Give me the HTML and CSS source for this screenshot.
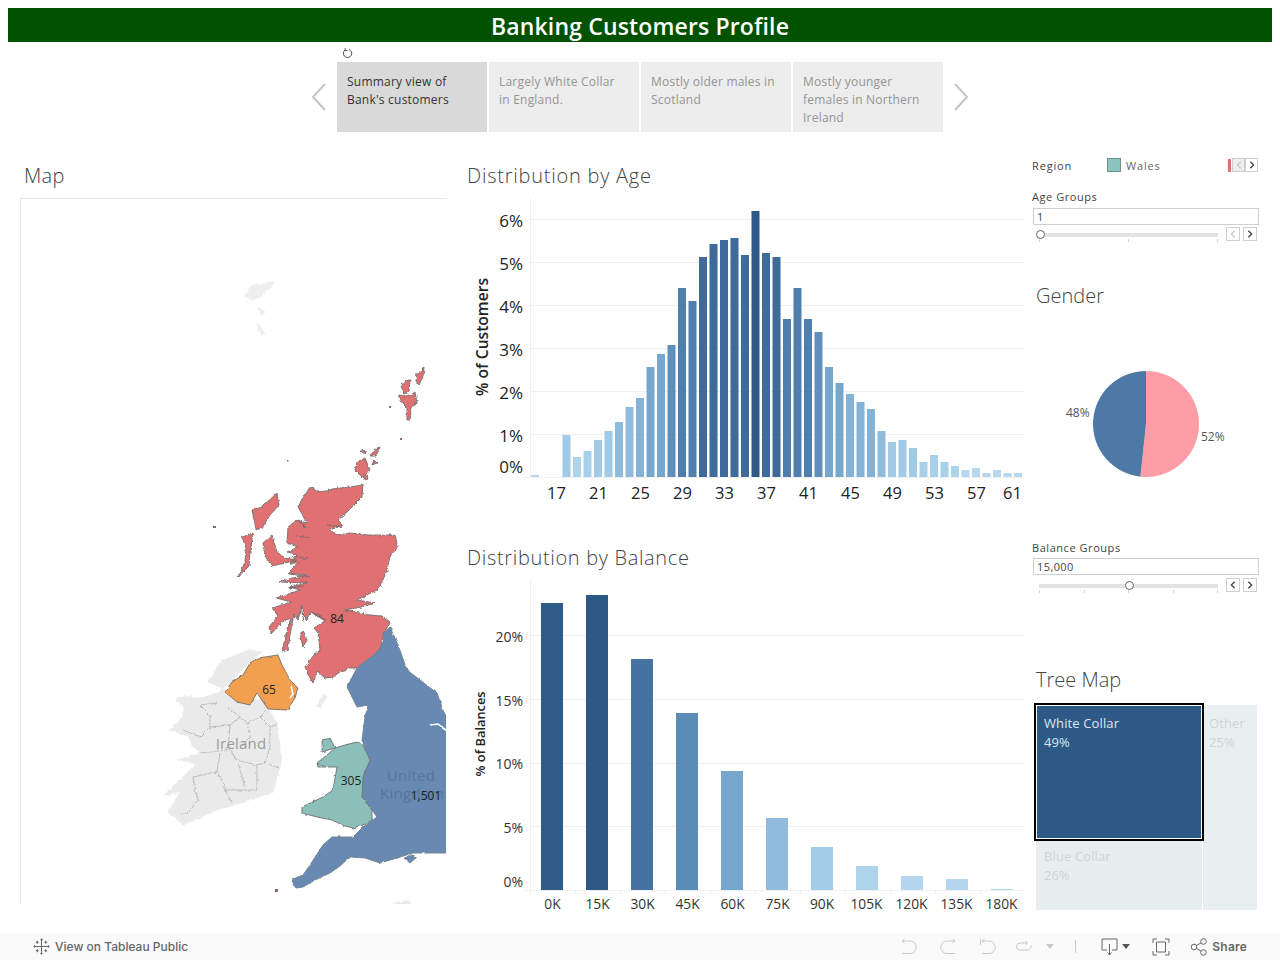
FILE: index.html
```html
<!DOCTYPE html>
<html lang="en">
<head>
<meta charset="utf-8">
<title>Banking Customers Profile</title>
<link rel="stylesheet" href="styles.css">
</head>
<body>
<div class="page">
  <header class="banner">Banking Customers Profile</header>

  <nav class="story">
    <svg class="revert" viewBox="0 0 12 12"><path d="M3 2.5 A4.2 4.2 0 1 0 7 1.9"/><path d="M3.2 0.6 L3 3.2 L5.6 3"/></svg>
    <div class="story-row">
      <svg class="arrow" viewBox="0 0 16 30"><path d="M14 2 L2 15 L14 28"/></svg>
      <div class="point active">Summary view of<br>Bank's customers</div>
      <div class="point">Largely White Collar<br>in England.</div>
      <div class="point">Mostly older males in<br>Scotland</div>
      <div class="point">Mostly younger<br>females in Northern<br>Ireland</div>
      <svg class="arrow" viewBox="0 0 16 30"><path d="M2 2 L14 15 L2 28"/></svg>
    </div>
  </nav>

  <main class="dash">
    <section class="col-map">
      <h2 class="title map-title">Map</h2>
      <div class="map-frame">
        <svg class="map" viewBox="20 198 426 706">
          <defs>
            <filter id="rough" x="-5%" y="-5%" width="110%" height="110%">
              <feTurbulence type="fractalNoise" baseFrequency="0.3" numOctaves="2" seed="4"/>
              <feDisplacementMap in="SourceGraphic" scale="3.5" xChannelSelector="R" yChannelSelector="G"/>
            </filter>
            <filter id="soft" x="-5%" y="-5%" width="110%" height="110%">
              <feTurbulence type="fractalNoise" baseFrequency="0.16" numOctaves="2" seed="7"/>
              <feDisplacementMap in="SourceGraphic" scale="2.5" xChannelSelector="R" yChannelSelector="G"/>
            </filter>
          </defs>
          <g filter="url(#rough)">
            <path class="faint" d="M250 286 L256 284 L262 285 L268 282 L275 282 L270 288 L264 292 L262 297 L252 300 L243 295 L248 292 Z M258 307 L265 312 L262 316 Z M257 323 L263 330 L264 336 L258 330 Z"/>
            <path class="grey" d="M250 650 L262 652 L240 672 L232 682 L225 687 L218 693 L200 698 L188 696 L175 698 L184 708 L182 718 L170 730 L188 736 L193 747 L200 753 L178 760 L196 764 L183 777 L163 796 L180 792 L168 812 L183 825 L217 810 L245 802 L273 792 L282 760 L277 723 L268 708 L262 700 L228 692 L208 682 L222 660 Z"/>
            <path class="grey" d="M323 695 L327 696 L320 708 L316 707 Z"/>
            <path class="grey" d="M393 903 L410 901 L411 906 L398 906 Z"/>
            <path class="county" d="M183 730 L200 737 L210 727 L210 715 L200 705 L218 703 M210 727 L230 725 L240 717 L227 707 M230 725 L228 747 L237 760 L257 765 L265 763 M200 753 L227 750 L228 747 M217 772 L220 753 M193 777 L217 772 L222 780 L225 790 L257 790 M193 777 L195 790 L198 800 L188 813 L180 815 M225 790 L232 803 M238 763 L245 787 M257 765 L257 790 M240 717 L247 723 L260 717 L267 710 M247 723 L250 737 L238 750 M260 717 L270 727 L270 747 L265 763 M270 765 L280 768 M270 727 L277 725"/>

            <path class="scot" d="M310 487 L318 492 L326 491 L332 489 L350 487 L363 485 L362 497 L355 504 L345 514 L338 520 L343 525 L330 530 L338 535 L350 533 L368 535 L395 535 L398 547 L390 556 L387 570 L380 587 L377 590 L365 596 L357 600 L375 603 L361 607 L345 610 L370 615 L382 616 L390 623 L384 633 L380 650 L365 662 L357 668 L350 668 L340 672 L333 677 L325 678 L317 671 L313 683 L309 676 L305 667 L313 656 L320 650 L318 633 L314 628 L325 621 L311 612 L306 620 L302 605 L298 620 L294 614 L290 635 L288 650 L282 652 L286 635 L291 618 L282 622 L271 634 L269 627 L278 616 L272 608 L292 602 L276 598 L300 590 L290 587 L307 583 L279 582 L293 578 L307 575 L288 573 L298 563 L290 563 L297 555 L288 552 L298 547 L287 543 L288 527 L297 520 L307 523 L298 507 L303 498 Z"/>
            <path class="scot" d="M277 493 L279 505 L270 515 L262 528 L256 530 L252 510 L262 507 Z M242 537 L253 533 L250 552 L249 566 L243 572 L238 578 L245 562 L246 548 Z M263 543 L272 535 L277 552 L285 558 L297 560 L285 563 L272 566 L265 556 Z M303 630 L307 640 L303 647 L300 638 Z"/>
            <path class="scot" d="M357 462 L365 458 L370 470 L363 478 L355 470 Z M363 449 L367 454 L361 452 Z M372 452 L380 447 L376 456 L370 456 Z M374 460 L377 463 L372 465 Z M365 474 L368 479 L364 480 Z"/>
            <path class="scot" d="M424 368 L423 376 L419 385 L416 381 L417 373 Z M405 381 L410 380 L409 392 L404 394 L401 386 Z M399 395 L406 396 L412 394 L415 392 L417 403 L413 405 L411 408 L410 420 L407 420 L407 408 L402 403 Z"/>
            <path class="loch" d="M298 520 L306 528 M296 536 L310 538 M292 556 L308 559 M289 574 L310 577 M289 588 L304 586 M301 606 L304 622 M312 612 L326 620 M327 525 L342 527"/>
          </g>
          <g filter="url(#soft)">
            <path class="eng" d="M390 627 L398 645 L407 670 L420 680 L437 693 L443 710 L450 727 L460 740 L460 853 L446 853 L430 853 L413 853 L397 858 L380 863 L365 858 L350 857 L340 866 L330 873 L315 880 L303 887 L296 888 L292 883 L293 879 L303 875 L310 865 L323 845 L332 837 L353 837 L363 827 L377 817 L372 810 L362 797 L363 777 L370 760 L362 740 L365 717 L368 705 L357 707 L347 687 L357 668 L380 650 L384 633 Z M404 858 L412 855 L417 857 L410 863 Z"/>
            <path class="wales" d="M322 740 L330 738 L335 748 L322 752 Z M335 748 L345 745 L357 742 L363 745 L370 760 L363 777 L362 797 L372 810 L372 820 L363 825 L353 828 L345 826 L332 820 L317 817 L302 813 L302 807 L323 797 L333 790 L337 767 L318 767 L317 763 L327 755 Z"/>
            <path class="nire" d="M258 658 L278 655 L282 665 L290 680 L298 688 L295 698 L287 710 L268 709 L257 693 L250 705 L237 702 L225 692 L232 682 L243 675 L250 663 Z"/>
            <path class="lough" d="M291 686 L293 694 L290 698 M430 725 L438 724 L447 731"/>
          </g>
          <path class="scot-dot" d="M213 526 h3 v2 h-3 Z M275 889 h3 v3 h-3 Z M287 460 h1.5 v1.5 h-1.5 Z M400 438 h2 v2 h-2 Z M389 406 h2 v2 h-2 Z"/>
          <text class="lbl-ire" x="241" y="749">Ireland</text>
          <text class="lbl-uk" x="411" y="781">United</text>
          <text class="lbl-uk lbl-start" x="380" y="799">Kingdom</text>
          <text class="lbl-val" x="337" y="623">84</text>
          <text class="lbl-val" x="269" y="694">65</text>
          <text class="lbl-val" x="351" y="785">305</text>
          <text class="lbl-val" x="426" y="800">1,501</text>
        </svg>
      </div>
    </section>

    <section class="col-charts">
      <h2 class="title chart-title chart-title-age">Distribution by Age</h2>
      <svg class="chart-age" viewBox="467 198 565 312">
        <path class="grid" d="M530 219.5H1024M530 262.5H1024M530 305.5H1024M530 348.5H1024M530 391.5H1024M530 434.5H1024M525 477.5H1024M530.5 198V477"/>
        <g class="age-y">
          <text x="523" y="227">6%</text><text x="523" y="270">5%</text><text x="523" y="313">4%</text><text x="523" y="356">3%</text><text x="523" y="399">2%</text><text x="523" y="442">1%</text><text x="523" y="473">0%</text>
        </g>
        <text class="age-axis" transform="translate(488 337) rotate(-90)">% of Customers</text>
        <g>
          <rect class="b1" x="531" y="475" width="8" height="2"/>
          <rect class="b4" x="562.5" y="435" width="8" height="42"/>
          <rect class="b2" x="573" y="457" width="8" height="20"/>
          <rect class="b3" x="583.5" y="451" width="8" height="26"/>
          <rect class="b4" x="594" y="440" width="8" height="37"/>
          <rect class="b4" x="604.5" y="431" width="8" height="46"/>
          <rect class="b5" x="615" y="422" width="8" height="55"/>
          <rect class="b5" x="625.5" y="407" width="8" height="70"/>
          <rect class="b6" x="636" y="398" width="8" height="79"/>
          <rect class="b7" x="646.5" y="367" width="8" height="110"/>
          <rect class="b7" x="657" y="354" width="8" height="123"/>
          <rect class="b8" x="667.5" y="345" width="8" height="132"/>
          <rect class="b9" x="678" y="288" width="8" height="189"/>
          <rect class="b9" x="688.5" y="301" width="8" height="176"/>
          <rect class="b10" x="699" y="257" width="8" height="220"/>
          <rect class="b10" x="709.5" y="244" width="8" height="233"/>
          <rect class="b10" x="720" y="240" width="8" height="237"/>
          <rect class="b10" x="730.5" y="238" width="8" height="239"/>
          <rect class="b10" x="741" y="255" width="8" height="222"/>
          <rect class="b11" x="751.5" y="211" width="8" height="266"/>
          <rect class="b10" x="762" y="253" width="8" height="224"/>
          <rect class="b10" x="772.5" y="257" width="8" height="220"/>
          <rect class="b9" x="783" y="319" width="8" height="158"/>
          <rect class="b9" x="793.5" y="288" width="8" height="189"/>
          <rect class="b9" x="804" y="319" width="8" height="158"/>
          <rect class="b8" x="814.5" y="332" width="8" height="145"/>
          <rect class="b7" x="825" y="367" width="8" height="110"/>
          <rect class="b7" x="835.5" y="383" width="8" height="94"/>
          <rect class="b6" x="846" y="394" width="8" height="83"/>
          <rect class="b6" x="856.5" y="402" width="8" height="75"/>
          <rect class="b6" x="867" y="409" width="8" height="68"/>
          <rect class="b5" x="877.5" y="431" width="8" height="46"/>
          <rect class="b4" x="888" y="442" width="8" height="35"/>
          <rect class="b4" x="898.5" y="440" width="8" height="37"/>
          <rect class="b4" x="909" y="448" width="8" height="29"/>
          <rect class="b3" x="919.5" y="462" width="8" height="15"/>
          <rect class="b3" x="930" y="455" width="8" height="22"/>
          <rect class="b3" x="940.5" y="462" width="8" height="15"/>
          <rect class="b2" x="951" y="466" width="8" height="11"/>
          <rect class="b1" x="961.5" y="470" width="8" height="7"/>
          <rect class="b1" x="972" y="468" width="8" height="9"/>
          <rect class="b1" x="982.5" y="473" width="8" height="4"/>
          <rect class="b1" x="993" y="470" width="8" height="7"/>
          <rect class="b1" x="1003.5" y="473" width="8" height="4"/>
          <rect class="b1" x="1014" y="473" width="8" height="4"/>
        </g>
        <g class="age-x">
          <text x="556.5" y="499">17</text><text x="598.5" y="499">21</text><text x="640.5" y="499">25</text><text x="682.5" y="499">29</text><text x="724.5" y="499">33</text><text x="766.5" y="499">37</text><text x="808.5" y="499">41</text><text x="850.5" y="499">45</text><text x="892.5" y="499">49</text><text x="934.5" y="499">53</text><text x="976.5" y="499">57</text><text x="1012.5" y="499">61</text>
        </g>
      </svg>

      <h2 class="title chart-title title-balance">Distribution by Balance</h2>
      <svg class="chart-bal" viewBox="467 580 565 335">
        <path class="grid" d="M530 635.5H1024M530 699.5H1024M530 763.5H1024M530 826.5H1024M525 890.5H1024M530.500 580V890M575.500 890v5M620.500 890v5M665.500 890v5M710.500 890v5M755.500 890v5M800.500 890v5M845.500 890v5M890.500 890v5M935.500 890v5M980.500 890v5M530.500 890v5"/>
        <g class="bal-y">
          <text x="523" y="642">20%</text><text x="523" y="706">15%</text><text x="523" y="769">10%</text><text x="523" y="833">5%</text><text x="523" y="887">0%</text>
        </g>
        <text class="bal-axis" transform="translate(485 734) rotate(-90)">% of Balances</text>
        <g>
          <rect class="v1" x="541" y="603" width="22" height="287"/>
          <rect class="b11" x="586" y="595" width="22" height="295"/>
          <rect class="v2" x="631" y="659" width="22" height="231"/>
          <rect class="v3" x="676" y="713" width="22" height="177"/>
          <rect class="v4" x="721" y="771" width="22" height="119"/>
          <rect class="v5" x="766" y="818" width="22" height="72"/>
          <rect class="v6" x="811" y="847" width="22" height="43"/>
          <rect class="v7" x="856" y="866" width="22" height="24"/>
          <rect class="v8" x="901" y="876" width="22" height="14"/>
          <rect class="v8" x="946" y="879" width="22" height="11"/>
          <rect class="v8" x="991" y="889" width="22" height="1"/>
        </g>
        <g class="bal-x">
          <text x="552.5" y="909">0K</text><text x="597.5" y="909">15K</text><text x="642.5" y="909">30K</text><text x="687.5" y="909">45K</text><text x="732.5" y="909">60K</text><text x="777.5" y="909">75K</text><text x="822" y="909">90K</text><text x="866.5" y="909">105K</text><text x="911.5" y="909">120K</text><text x="956.5" y="909">135K</text><text x="1001.5" y="909">180K</text>
        </g>
      </svg>
    </section>

    <aside class="col-side">
      <div class="legend">
        <span class="legend-name">Region</span>
        <span class="swatch"></span>
        <span class="legend-val">Wales</span>
        <span class="legend-pager">
          <span class="red-edge"></span>
          <span class="btn btn-off btn-small"><svg viewBox="0 0 12 12"><path d="M8 2 L4 6 L8 10"/></svg></span>
          <span class="btn btn-small"><svg viewBox="0 0 12 12"><path d="M4 2 L8 6 L4 10"/></svg></span>
        </span>
      </div>

      <div class="filter filter-age">
        <div class="filter-label">Age Groups</div>
        <div class="filter-input">1</div>
        <div class="slider-row">
          <div class="slider">
            <span class="track"></span>
            <span class="thumb thumb-start"></span>
            <span class="ticks"><i></i><i></i><i></i></span>
          </div>
          <span class="btn btn-off"><svg viewBox="0 0 12 12"><path d="M8 2 L4 6 L8 10"/></svg></span>
          <span class="btn"><svg viewBox="0 0 12 12"><path d="M4 2 L8 6 L4 10"/></svg></span>
        </div>
      </div>

      <h2 class="title side-title gender-title">Gender</h2>
      <svg class="pie" viewBox="1032 314 227 227">
        <path class="pie-f" d="M1146 424 L1146 371 A53 53 0 1 1 1140.4 476.7 Z"/>
        <path class="pie-m" d="M1146 424 L1140.4 476.7 A53 53 0 0 1 1146 371 Z"/>
        <text class="pie-lbl" x="1066" y="417">48%</text>
        <text class="pie-lbl" x="1201" y="441">52%</text>
      </svg>

      <div class="filter">
        <div class="filter-label">Balance Groups</div>
        <div class="filter-input filter-input-b">15,000</div>
        <div class="slider-row slider-row-b">
          <div class="slider">
            <span class="track"></span>
            <span class="thumb thumb-mid"></span>
            <span class="ticks"><i></i><i></i><i></i><i></i><i></i></span>
          </div>
          <span class="btn"><svg viewBox="0 0 12 12"><path d="M8 2 L4 6 L8 10"/></svg></span>
          <span class="btn"><svg viewBox="0 0 12 12"><path d="M4 2 L8 6 L4 10"/></svg></span>
        </div>
      </div>

      <h2 class="title side-title tree-title">Tree Map</h2>
      <div class="tree">
        <div class="cell white-collar">White Collar<br>49%</div>
        <div class="cell other">Other<br>25%</div>
        <div class="cell blue-collar">Blue Collar<br>26%</div>
      </div>
    </aside>
  </main>

  <footer class="toolbar">
    <div class="tb-left">
      <svg class="logo" viewBox="0 0 18 18">
        <path d="M9 3V15M3 9H15M9 0.5V3M7.8 1.7H10.2M9 15V17.5M7.8 16.3H10.2M0.5 9H3M1.7 7.8V10.2M15 9H17.5M16.3 7.8V10.2M4.5 3V6M3 4.5H6M13.5 3V6M12 4.5H15M4.5 12V15M3 13.5H6M13.5 12V15M12 13.5H15"/>
      </svg>
      <span class="tb-text">View on Tableau Public</span>
    </div>
    <div class="tb-right">
      <svg class="tb-icon off" viewBox="0 0 18 18"><path d="M2 3H10A6 6 0 0 1 10 15.500H2"/><path d="M4.500 0.800L2 3L4.500 5"/></svg>
      <svg class="tb-icon off gap-redo" viewBox="0 0 18 18"><path d="M16 3H8A6 6 0 0 0 8 15.500H16"/><path d="M13.500 0.800L16 3L13.500 5"/></svg>
      <svg class="tb-icon off gap-revert" viewBox="0 0 18 18"><path d="M1.500 0.500V7"/><path d="M3 3H10A6 6 0 0 1 10 15.500H3"/><path d="M5.500 0.800L3 3L5.500 5"/></svg>
      <svg class="tb-icon off gap-refresh" viewBox="0 0 18 18"><path d="M12 5H5A3.500 3.500 0 0 0 5 12H13A3.500 3.500 0 0 0 16 7.500"/><path d="M10.500 3L12.500 5L10.500 7"/></svg>
      <span class="caret caret-off"></span>
      <span class="sep"></span>
      <svg class="tb-icon dark gap-down" viewBox="0 0 18 18"><path d="M7 12H2V1H17V12H12"/><path d="M9.500 6V17M7.500 14.500L9.500 17L11.500 14.500"/></svg>
      <span class="caret"></span>
      <svg class="tb-icon dark gap-full" viewBox="0 0 18 18"><path d="M1 5V1H5M13 1H17V5M17 13V17H13M5 17H1V13"/><path d="M4.500 4H13.500V14H4.500Z"/></svg>
      <svg class="tb-icon dark gap-share" viewBox="0 0 18 18"><circle cx="4" cy="9" r="2.800"/><circle cx="13.500" cy="3.500" r="2.800"/><circle cx="13.500" cy="14.500" r="2.800"/><path d="M6.500 7.600L11 4.900M6.500 10.400L11 13.100"/></svg>
      <span class="tb-text share">Share</span>
    </div>
  </footer>
</div>
</body>
</html>
```

FILE: styles.css
```css
* { box-sizing: border-box; }
html, body { margin: 0; padding: 0; }
body { background: #fff; font-family: "Open Sans", "Liberation Sans", sans-serif; color: #333; overflow: hidden; }
.page { width: 1280px; height: 960px; display: flex; flex-direction: column; }

.banner {
  margin: 8px 8px 0; height: 34px; background: #005200; color: #fff;
  font-size: 23px; font-weight: 600; line-height: 37px; text-align: center; letter-spacing: 0.15px;
}

.story { height: 90px; position: relative; flex: none; }
.revert { position: absolute; left: 342px; top: 5px; width: 12px; height: 13px; fill: none; stroke: #555; stroke-width: 1; }
.story-row { display: flex; gap: 2px; margin: 20px 0 0 311px; align-items: center; }
.arrow { width: 16px; height: 30px; fill: none; stroke: #c4c4c4; stroke-width: 2; flex: none; }
.arrow:first-child { margin-right: 8px; }
.arrow:last-child { margin-left: 8px; }
.point {
  width: 150px; height: 70px; background: #ededed; color: #949494;
  font-size: 12px; line-height: 18px; padding: 11px 0 0 10px; letter-spacing: 0.22px;
}
.point.active { background: #d9d9d9; color: #333; }

.dash { flex: 1; display: grid; grid-template-columns: 447px 565px 227px; padding: 26px 0 0 20px; min-height: 0; }

.title { margin: 0 0 4px; height: 36px; font-size: 20px; font-weight: 300; line-height: 36px; color: #444; letter-spacing: 0.3px; }
.map-title { padding-left: 4px; }
.chart-title { letter-spacing: 0.66px; }
.chart-title-age { letter-spacing: 0.76px; }

.map-frame { width: 426px; height: 706px; border-left: 1px solid #e6e6e6; border-top: 1px solid #e6e6e6; overflow: hidden; }
.map { display: block; width: 426px; height: 706px; margin: -1px 0 0 -1px; }
.grey { fill: #eaeaea; stroke: #ececec; stroke-width: 0.6; }
.faint { fill: #eeeeee; stroke: #f0f0f0; stroke-width: 0.6; }
.county { fill: none; stroke: #adadad; stroke-width: 0.8; }
.scot { fill: #e06f72; stroke: #6f6f6f; stroke-width: 0.9; }
.loch { fill: none; stroke: #7a6a6a; stroke-width: 1.1; }
.eng { fill: #6889b1; stroke: #6f7f90; stroke-width: 0.9; }
.wales { fill: #8cbfba; stroke: #6f6f6f; stroke-width: 0.9; }
.nire { fill: #f2a04f; stroke: #6f6f6f; stroke-width: 0.9; }
.lough { fill: none; stroke: #fff; stroke-width: 1.6; }
.scot-dot { fill: #8a6a6a; }
.lbl-ire { font-size: 15px; fill: #9a9a9a; text-anchor: middle; letter-spacing: 0.2px; }
.lbl-uk { font-size: 15px; fill: #56769c; text-anchor: middle; letter-spacing: 0.3px; }
.lbl-start { text-anchor: start; }
.lbl-val { font-size: 12px; fill: #222; text-anchor: middle; }

.chart-age { display: block; width: 565px; height: 312px; }
.chart-bal { display: block; width: 565px; height: 335px; }
.title-balance { margin-top: 30px; }
.grid { fill: none; stroke: #f0f0f0; stroke-width: 1; }
.age-y text { font-size: 17px; fill: #222; text-anchor: end; }
.age-x text { font-size: 16.5px; fill: #222; text-anchor: middle; }
.age-axis { font-size: 15.6px; font-weight: 600; fill: #222; text-anchor: middle; }
.bal-y text { font-size: 14px; fill: #333; text-anchor: end; }
.bal-x text { font-size: 13.8px; fill: #333; text-anchor: middle; }
.bal-axis { font-size: 12.8px; font-weight: 600; fill: #222; text-anchor: middle; }

.b1 { fill: #b5d8ef; } .b2 { fill: #aed4ec; } .b3 { fill: #a7d0ea; } .b4 { fill: #a0cae6; }
.b5 { fill: #8fbcdd; } .b6 { fill: #84b3d7; } .b7 { fill: #76a7cd; } .b8 { fill: #5f90bb; }
.b9 { fill: #4f7fae; } .b10 { fill: #3e6b9a; } .b11 { fill: #2c5985; }
.v1 { fill: #305c89; } .v2 { fill: #4672a3; } .v3 { fill: #5b8bb7; } .v4 { fill: #76a7cd; }
.v5 { fill: #8fbbdc; } .v6 { fill: #a2cce7; } .v7 { fill: #aed4ec; } .v8 { fill: #b4d7ef; }

.col-side { font-size: 11px; color: #444; display: flex; flex-direction: column; width: 227px; }
.legend { height: 14px; display: flex; align-items: center; }
.legend-name { width: 75px; letter-spacing: 0.85px; }
.swatch { width: 14px; height: 14px; background: #8cc4bf; border: 1px solid #6f8f8c; }
.legend-val { margin-left: 5px; color: #666; letter-spacing: 0.85px; }
.legend-pager { margin-left: auto; margin-right: 1px; display: flex; align-items: center; }
.red-edge { width: 3px; height: 13px; background: #e06f72; margin-right: 1px; }

.filter-age { margin-top: 18px; }
.filter-label { height: 14px; line-height: 14px; letter-spacing: 0.55px; }
.filter-input {
  margin: 4px 0 0 1px; height: 17px; border: 1px solid #cfcfcf; padding-left: 3px;
  line-height: 15px; color: #444; letter-spacing: 0.4px;
}
.filter-input-b { margin-top: 3px; }
.slider-row { margin-top: 2px; height: 14px; display: flex; align-items: center; gap: 3px; }
.slider-row-b { margin-top: 3px; }
.slider { width: 179px; height: 14px; margin: 0 5px 0 7px; position: relative; flex: none; }
.track { position: absolute; left: 0; right: 0; top: 6px; height: 4px; background: #e3e3e3; }
.thumb { position: absolute; top: 3px; width: 9px; height: 9px; border: 1px solid #666; border-radius: 50%; background: #fff; }
.thumb-start { left: -3px; }
.thumb-mid { left: 86px; }
.ticks { position: absolute; left: 0; right: 0; top: 12px; display: flex; justify-content: space-between; }
.ticks i { width: 1px; height: 3px; background: #d5d5d5; }
.btn { width: 14px; height: 14px; border: 1px solid #cfcfcf; display: flex; align-items: center; justify-content: center; flex: none; }
.btn svg { width: 10px; height: 10px; fill: none; stroke: #444; stroke-width: 1.6; }
.btn-off svg { stroke: #c8c8c8; }
.btn-small { width: 13px; }
.btn-off.btn-small { background: #eee; }

.side-title { margin: 0; padding-left: 4px; letter-spacing: 0; }
.gender-title { margin-top: 37px; }
.pie { display: block; width: 227px; height: 227px; }
.pie-f { fill: #ff9da7; }
.pie-m { fill: #4e79a7; }
.pie-lbl { font-size: 12px; fill: #555; }
.tree-title { margin-top: 70px; }
.tree {
  margin: 7px 0 0 4px; width: 221px; display: grid;
  grid-template-columns: 166px 54px; grid-template-rows: 134px 69px; gap: 2px 1px;
  font-size: 13px; line-height: 19px;
}
.cell { padding: 9px 0 0 8px; letter-spacing: 0.12px; color: #ced5d4; background: #e7eeed; }
.white-collar { background: #2c5985; color: #dfe7ef; box-shadow: inset 0 0 0 1px #fff, 0 0 0 2px #000; position: relative; }
.other { grid-column: 2; grid-row: 1 / span 2; padding-left: 6px; background: #e9efee; }
.blue-collar { padding-top: 6px; }

.toolbar { height: 27px; background: #fafafa; flex: none; display: flex; align-items: center; justify-content: space-between; font-family: Inter, "Liberation Sans", sans-serif; }
.tb-left { display: flex; align-items: center; padding-left: 33px; }
.logo { width: 17px; height: 17px; fill: none; stroke: #666; stroke-width: 1.1; margin-right: 5px; }
.tb-text { font-size: 12px; font-weight: 500; color: #666; }
.tb-right { display: flex; align-items: center; padding-right: 33px; }
.tb-icon { width: 18px; height: 18px; fill: none; stroke-width: 1; flex: none; }
.tb-icon.off { stroke: #c9c9c9; }
.tb-icon.dark { stroke: #666; }
.gap-redo { margin-left: 21px; }
.gap-revert { margin-left: 22px; }
.gap-refresh { margin-left: 18px; }
.caret { width: 0; height: 0; border-left: 4px solid transparent; border-right: 4px solid transparent; border-top: 5px solid #555; margin-left: 4px; }
.caret-off { border-top-color: #c9c9c9; margin-left: 13px; }
.sep { width: 1px; height: 13px; background: #ccc; margin-left: 21px; }
.gap-down { margin-left: 24px; }
.gap-full { margin-left: 22px; }
.gap-share { margin-left: 20px; }
.share { margin-left: 4px; font-weight: 600; letter-spacing: 0.2px; }
```
